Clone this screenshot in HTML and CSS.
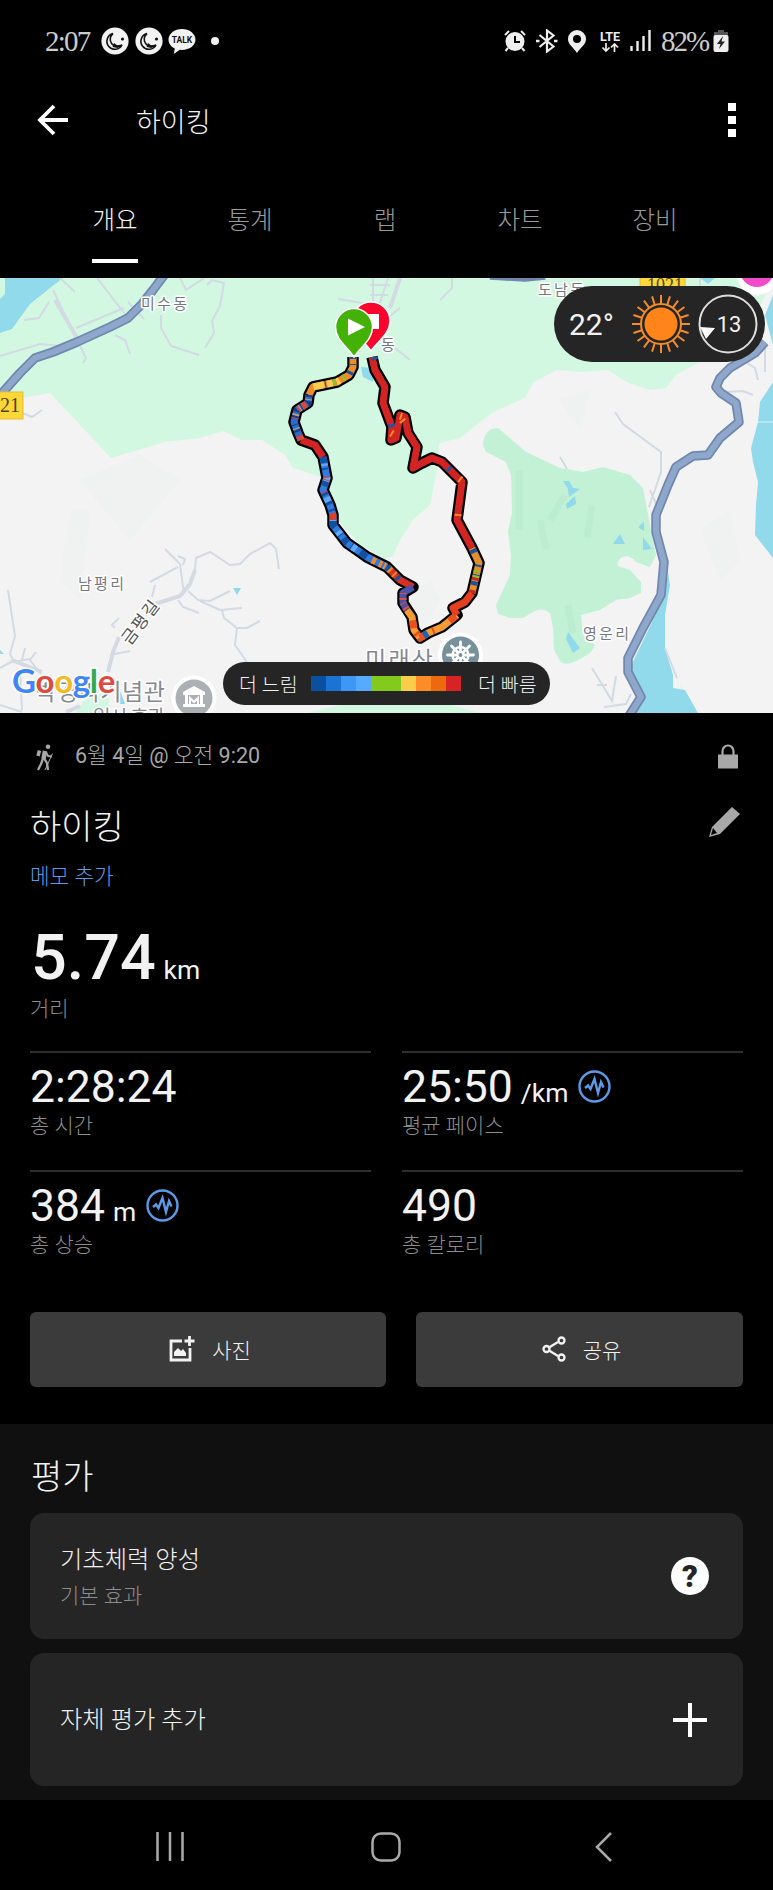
FILE: index.html
```html
<!DOCTYPE html>
<html lang="ko">
  <head>
    <meta charset="UTF-8" />
    <meta name="viewport" content="width=device-width, initial-scale=1.0" />
    <title>하이킹</title>
    <link rel="stylesheet" href="styles.css">
  </head>
  <body>
    <div class="status-bar">
      <div class="status-left">
        <span class="clock">2:07</span>
        <svg class="moon" width="28" height="28" viewBox="0 0 28 28">
          <circle cx="14" cy="14" r="13.6" fill="#f2f2f2" />
          <path d="M12 6.5a8 8 0 1 0 9 11.5a7 7 0 0 1-9-11.5z" fill="none" stroke="#111" stroke-width="1.6" />
          <path d="M13 16l3 2.2 4.500-.5-4 3.300-5-1z" fill="#111" />
          <circle cx="21.5" cy="12" r="1.6" fill="#111" />
        </svg>
        <svg class="moon" width="28" height="28" viewBox="0 0 28 28">
          <circle cx="14" cy="14" r="13.6" fill="#f2f2f2" />
          <path d="M12 6.5a8 8 0 1 0 9 11.5a7 7 0 0 1-9-11.5z" fill="none" stroke="#111" stroke-width="1.6" />
          <path d="M13 16l3 2.2 4.500-.5-4 3.300-5-1z" fill="#111" />
          <circle cx="21.5" cy="12" r="1.6" fill="#111" />
        </svg>
        <svg class="talk" width="28" height="28" viewBox="0 0 28 28">
          <path d="M14 2C6.500 2 .5 6.700.5 12.500c0 4 2.600 7.300 6.300 9l-1 5.500 6-4.200c9 .8 15.700-4 15.700-10.300C27.500 6.700 21.500 2 14 2z" fill="#f2f2f2" />
          <text x="14" y="15.500" text-anchor="middle" class="talk-text">TALK</text>
        </svg>
        <span class="dot"></span>
      </div>
      <div class="status-right">
        <svg width="22" height="22" viewBox="0 0 22 22">
          <g fill="none" stroke="#eee" stroke-width="2">
            <path d="M1 5l4-4M21 5l-4-4M4 18l-2.500 3M18 18l2.500 3" />
          </g>
          <circle cx="11" cy="11.500" r="9.500" fill="#eee" />
          <path d="M11 6v6h5" fill="none" stroke="#000" stroke-width="2" />
        </svg>
        <svg width="22" height="24" viewBox="0 0 22 24">
          <path d="M3.500 6l14 11.500-6.500 5v-21L17.500 6.500 3.500 18" fill="none" stroke="#eee" stroke-width="2.200" />
          <path d="M0 12h3.500M18 12h3.500" stroke="#eee" stroke-width="2.500" />
        </svg>
        <svg width="18" height="23" viewBox="0 0 18 23">
          <path fill="#eee" fill-rule="evenodd" d="M9 0a9 9 0 0 0-9 9c0 5.500 5.500 8.500 9 14 3.500-5.500 9-8.500 9-14a9 9 0 0 0-9-9zm0 5a4 4 0 1 1 0 8 4 4 0 0 1 0-8z" />
        </svg>
        <svg class="network" width="24" height="24" viewBox="0 0 24 24">
          <text x="12" y="11.500" text-anchor="middle" class="lte">LTE</text>
          <path d="M8 14v8M4.500 18.500L8 22l3.500-3.500M16.500 23v-8M13 18.500l3.500-3.500 3.500 3.500" fill="none" stroke="#eee" stroke-width="1.700" />
        </svg>
        <svg class="signal" width="21" height="22" viewBox="0 0 21 22">
          <path d="M1.500 16v5M7.500 11v10M13.500 6v15M19.500 0v21" stroke="#eee" stroke-width="2.400" />
        </svg>
        <span class="percent">82%</span>
        <svg class="battery" width="16" height="22" viewBox="0 0 16 22">
          <path d="M5 0h6v2h4v4H1V2h4z" fill="#555" />
          <rect x=".5" y="5" width="15" height="17" rx="2" fill="#eee" />
          <path d="M10 6l-6 8h3.500L6 19l6-7.500H8.500z" fill="#222" />
        </svg>
      </div>
    </div>

    <header class="app-bar">
      <svg width="32" height="32" viewBox="0 0 32 32">
        <path d="M17 2L3 16l14 14M3 16h28" fill="none" stroke="#fff" stroke-width="3.800" />
      </svg>
      <h1>하이킹</h1>
      <div class="more"><i></i><i></i><i></i></div>
    </header>

    <nav class="tabs">
      <a class="tab active">개요</a>
      <a class="tab">통계</a>
      <a class="tab">랩</a>
      <a class="tab">차트</a>
      <a class="tab">장비</a>
    </nav>

    <div class="map">
      <svg class="map-canvas" width="773" height="435" viewBox="0 278 773 435">
        <rect x="0" y="278" width="773" height="435" fill="#f3f3f3" />

        <!-- zonas verdes -->
        <path fill="#d3f8e2" d="M0 278H773L745 340 700 362 676 375 666 388 650 390 626 382 608 370 583 372 556 370 533 383 525 398 493 412 460 438 439 443 437 470 430 505 413 520 400 540 393 556 385 559 360 545 333 515 325 478 318 476 293 468 285 455 262 440 242 440 223 431 200 438 165 442 111 458 50 393 23 398 0 400z" />
        <path fill="#d3f8e2" d="M75 713L85 700 110 690 108 713zM307 713L345 704 440 702 480 713zM690 713l-10-28 18 28z" />
        <path fill="#c3f1d5" d="M483 445C484 432 490 428 498 428L526 452 560 468 583 472 603 467 630 475 643 488 650 525 656 555 650 567 636 562C626 550 616 560 618 566L630 570 641 582V593L630 598 616 600 600 610 581 615 583 635 595 645 591 652C580 660 566 668 560 661L554 650 553 628 550 613C543 608 538 609 533 612L523 618H510L498 614 496 605 510 575 511 555 508 532 512 512 511 475 506 462 486 452z" />
        <g fill="none" stroke="#b8e9cc" stroke-width="7" opacity=".5">
          <path d="M519 470v60M540 520l6 30M592 505l-5 32M565 495l-15 25M568 605l5 28" />
        </g>
        <g fill="#e9ebec" opacity=".25">
          <path d="M80 480l60-25 40 25-50 60zM70 510l20 0-10 90-20-20zM560 400l30-10-10 40zM700 530l30-20 10 50-20 20zM400 610l30-30 10 20-20 30z" />
        </g>

        <!-- agua -->
        <g fill="#90daec">
          <path d="M5 278H63L50 288 30 304 12 329 0 333V299L5 294z" />
          <path d="M773 382L760 402 758 422 751 448 753 462 758 482 756 505 755 535 773 558z" />
          <path d="M773 295l-8 20 8 30z" />
          <path d="M668 572L670 585 665 615V648L673 675V688L685 690 698 713H633L645 695 630 668 665 595z" />
          <path d="M361 367l12 1v14l-10-5zM563 481h6l4 7 7 1-11 8-1-8zM575 496l1 8-9 5-1-5zM620 534l5 10h-12zM638 527l6-5v9zM643 537l9 12-9 1zM568 632l12 16-7 5-7-14zM233 588h8l-4 7zM0 650l4 4H0zM120 690l5 14h-6z" />
          <path d="M700 278h15l-7 6z" />
        </g>
        <path d="M758 422h15" stroke="#d8eff5" stroke-width="1" />

        <!-- calles pequeñas -->
        <g fill="none" stroke="#d3dae4" stroke-width="2">
          <path d="M53 290l23 48 10 20-3 5M97 278l31 40M76 328l48-20M60 278l15 14M24 320l15-2 10-16M0 356l40-12 22 2M161 315l0 13 10 18 28 9M205 348l9-15-2-12 8-15 4-23-12-3-5 5M115 335l10 5 5 14M128 302l16 17M20 412l12 5 10-7M180 278l6 12 18-12" />
          <path d="M373 278l0 30M388 278l-8 25M338 299l30 5M395 348l15 12M370 285h20M370 295h18M440 300l12-12v-10M390 316l10-8" />
          <path d="M8 590l7 46-5 18 4 8 15-3 12 15M0 668l15-8M22 660l3-12M30 660l6-8M0 705l22 7M20 670l2 40M165 549l15 15 4 30M178 556l7 3-2 6M195 570l1-12 14-6 20 13 10-1 10-10 20-11 6 6 3 20M188 591l10 9 12 1 20-10M200 601l20 9 22-2M222 610l2 8 13 10h10l13-7M237 628l-2 17 12 17M155 585l-3 12M150 582l28-15M178 600l5 7 16 6M110 655l20-4M115 628l-3-3 7-7" />
          <path d="M615 412l8 12 38 28v20l-12 35M560 457l7 12M592 668l20 33 4-25M597 685h10M604 707l22-3 5-10M665 648l12 30M758 380l-3-12-12-8M725 392l18-1 10 4M700 278l0 8M650 490l8 18M765 342v30" />
        </g>
        <g fill="none" stroke="#d3dae4" stroke-width="4">
          <path d="M108 672l5-20 6-15M155 604l25-8 10-12 5-14M12 660l30 12M66 712l14-6M400 278l-10 30M55 300l22 38" />
        </g>

        <!-- carretera principal -->
        <path class="road-edge" d="M165 274L153 290 142 304 128 318 110 327 77 342 53 352 35 358 20 373 3 392-6 402" />
        <path class="road-fill" d="M165 274L153 290 142 304 128 318 110 327 77 342 53 352 35 358 20 373 3 392-6 402" />
        <path class="road-edge" d="M490 275L525 277 545 275" />
        <path class="road-edge" d="M765 342L755 353 730 368 720 378 716 387 721 393 736 403 739 422 720 438 708 455 693 456 676 467 668 485 660 505 656 515V532L664 562 661 595 643 628 628 658V672L641 697 629 716" />
        <path class="road-fill" d="M765 342L755 353 730 368 720 378 716 387 721 393 736 403 739 422 720 438 708 455 693 456 676 467 668 485 660 505 656 515V532L664 562 661 595 643 628 628 658V672L641 697 629 716" />

        <!-- etiquetas -->
        <rect x="-2" y="392" width="25" height="27" fill="#fbd738" stroke="#e5bd30" />
        <text x="0" y="412" class="shield">21</text>
        <rect x="640" y="270" width="45" height="19" fill="#fbd738" stroke="#e5bd30" />
        <text x="647" y="291" class="shield small">1021</text>
        <g class="place">
          <text x="141" y="309" textLength="46">미수동</text>
          <text x="538" y="295" textLength="46">도남동</text>
          <text x="381" y="350">동</text>
          <text x="78" y="589" textLength="46">남평리</text>
          <text x="583" y="639" textLength="46">영운리</text>
          <text x="0" y="0" textLength="50" class="dark" transform="translate(130 646) rotate(-53)">금평길</text>
        </g>
        <text x="365" y="668" class="place-big" textLength="68">미래산</text>
        <text x="35" y="700" class="place-big" textLength="130">박경리기념관</text>
        <text x="93" y="724" class="place-big sub" textLength="72">일시 휴관</text>

        <circle cx="194" cy="698" r="22.500" fill="#fff" />
        <circle cx="194" cy="698" r="18.500" fill="#acb0b4" />
        <path d="M183 692l11-6 11 6v3h-22zM185 695h3v11h-3zM200 695h3v11h-3zM183 704h22v3h-22z" fill="#fff" />
        <path d="M190 704v-6l4 4 4-4v6" fill="none" stroke="#fff" stroke-width="2" />

        <circle cx="460.500" cy="655" r="22.500" fill="#fff" />
        <circle cx="460.500" cy="655" r="18.500" fill="#78909c" />
        <g transform="translate(460.500 655)" fill="none" stroke="#fff">
          <circle r="8" stroke-width="2.500" />
          <circle r="3" stroke-width="2" />
          <path stroke-width="2.800" stroke-linecap="round" d="M0-13V-4M0 13V4M-13 0H-4M13 0H4M-9-9l6 6M9 9L3 3M9-9L3-3M-9 9l6-6" />
        </g>
        <circle cx="757" cy="275" r="20" fill="#fff" />
        <path d="M745 287l13 9 13-9z" fill="#fff" />
        <circle cx="757" cy="270" r="17" fill="#f04bc8" />

        <!-- ruta -->
        <path class="track-edge" d="M353 357V367L349 375 337 382 313 387 309 395 308 403 297 410 294 422 298 433 301 440 315 445 323 457 327 478 323 490 330 505 333 515V525L347 543 360 552 367 557 387 567 400 580 413 587 403 593V603L412 617 414 630 420 638 428 633 442 627 457 615 453 608 465 602 472 593 479 563 472 548 457 520 462 482 442 462 432 458 422 463 413 468 417 447 408 433 405 417 400 415 396 438 391 440 392 427 383 403 385 387 375 370 372 357" />
        <g class="track">
          <path stroke="#f08c28" d="M353 357V367L349 375 337 382 313 387 309 395" />
          <path stroke="#2d6ccd" d="M309 395L308 403 297 410 294 422 298 433 301 440" />
          <path stroke="#d32424" d="M301 440L315 445 323 457" />
          <path stroke="#2f7be0" d="M323 457L327 478 323 490 330 505 333 515V525L347 543 360 552 367 557 387 567" />
          <path stroke="#d83022" d="M387 567L400 580 413 587" />
          <path stroke="#4b52a8" d="M413 587L403 593V603L407 610" />
          <path stroke="#f59b33" d="M407 610L412 617 414 630 420 638 428 633 442 627 457 615" />
          <path stroke="#e2401f" d="M457 615L453 608 465 602 472 593" />
          <path stroke="#e2902c" d="M472 593L479 563 472 548" />
          <path stroke="#d32424" d="M472 548L457 520 462 482 442 462 432 458 422 463 413 468 417 447 408 433 405 417 400 415 396 438 391 440 392 427 383 403 385 387 375 370 372 357" />
        </g>
        <!-- cambios de ritmo sobre la ruta -->
        <g class="track">
          <path stroke="#1552a8" stroke-dasharray="2 5 1 7 3 19" d="M353 357V367L349 375 337 382 313 387 309 395" />
          <path stroke="#fbcd4b" stroke-dasharray="0 30 3 4 6 3 3 0 8 40" d="M353 357V367L349 375 337 382 313 387 309 395" />
          <path stroke="#7fc832" stroke-dasharray="0 24 2 8 2 90" d="M353 357V367L349 375 337 382 313 387 309 395" />
          <path stroke="#123f87" stroke-dasharray="2 4 3 6 1 5" d="M309 395L308 403 297 410 294 422 298 433 301 440" />
          <path stroke="#d64a3c" stroke-dasharray="0 10 5 3 2 9 1 8" d="M309 395L308 403 297 410 294 422 298 433 301 440" />
          <path stroke="#c9a067" stroke-dasharray="0 4 1 12 1 7 2 9" d="M309 395L308 403 297 410 294 422 298 433 301 440" />
          <path stroke="#1450a0" stroke-dasharray="6 5 2 9 8 7 3 4" d="M323 457L327 478 323 490 330 505 333 515V525L347 543 360 552 367 557" />
          <path stroke="#62a8f5" stroke-dasharray="0 7 2 12 4 17 5 11" d="M323 457L327 478 323 490 330 505 333 515V525L347 543 360 552 367 557" />
          <path stroke="#d8432f" stroke-dasharray="0 20 1 2 1 12 1 22 7 200" d="M323 457L327 478 323 490 330 505 333 515V525L347 543 360 552 367 557" />
          <path stroke="#f08c28" stroke-dasharray="4 4 3 2 2 3" d="M372 560L387 567 395 575" />
          <path stroke="#1450a0" stroke-dasharray="3 11" d="M387 567L400 580" />
          <path stroke="#e0503c" stroke-dasharray="1 4 2 3" d="M403 593V603L407 610" />
          <path stroke="#e8501d" stroke-dasharray="0 12 8 5 3 3 6 9 2 6" d="M407 610L412 617 414 630 420 638 428 633 442 627 457 615" />
          <path stroke="#1e62b5" stroke-dasharray="0 36 5 200" d="M407 610L412 617 414 630 420 638 428 633 442 627 457 615" />
          <path stroke="#1e50a0" stroke-dasharray="0 8 4 5 2 8 2 13 4 80" d="M472 593L479 563 472 548" />
          <path stroke="#d32424" stroke-dasharray="3 10 3 5 1 60" d="M472 593L479 563 472 548" />
          <path stroke="#7fc832" stroke-dasharray="0 16 2 3 2 80" d="M472 593L479 563 472 548" />
          <path stroke="#f08c28" stroke-dasharray="2 80" d="M458 516L460 490M461 480L456 476M391 433L396 436M402 420L406 425M400 416L406 418" />
          <path stroke="#23559f" stroke-dasharray="3 80" d="M391 424L393 430M450 470L447 467M374 357L376 365" />
        </g>

        <!-- marcadores de inicio y fin -->
        <path d="M371 351C364 341 352 334 352 321a19 19 0 0 1 38 0C390 334 378 341 371 351z" fill="#f9052d" stroke="#fff" stroke-width="1.500" />
        <rect x="363" y="314" width="16" height="15" fill="#fff" />
        <path d="M354 357C347 346 335.500 340 335.500 327a18.500 18.500 0 0 1 37 0C372.500 340 361 346 354 357z" fill="#43b106" stroke="#fff" stroke-width="1.500" />
        <path d="M348 318.500V335.500L365 327z" fill="#fff" />
      </svg>

      <div class="google"><b class="g-blue">G</b><b class="g-red">o</b><b class="g-yellow">o</b><b class="g-blue">g</b><b class="g-green">l</b><b class="g-red">e</b></div>

      <div class="weather">
        <span class="temp">22°</span>
        <svg width="58" height="58" viewBox="-29 -29 58 58">
          <circle r="16.500" fill="#ff851b" />
          <g fill="none" stroke="#f28c2b" stroke-width="2">
            <circle r="20" />
            <path d="M0-20v-9M0 20v9M-20 0h-9M20 0h9" />
            <path d="M0-20v-9M0 20v9M-20 0h-9M20 0h9" transform="rotate(18)" />
            <path d="M0-20v-9M0 20v9M-20 0h-9M20 0h9" transform="rotate(36)" />
            <path d="M0-20v-9M0 20v9M-20 0h-9M20 0h9" transform="rotate(54)" />
            <path d="M0-20v-9M0 20v9M-20 0h-9M20 0h9" transform="rotate(72)" />
          </g>
        </svg>
        <svg class="wind" width="60" height="60" viewBox="-30 -30 60 60">
          <circle r="28.500" fill="none" stroke="#ddd" stroke-width="2" />
          <path d="M-28 3l15 1-9 11z" fill="#fff" />
          <text x="1" y="8" text-anchor="middle" class="wind-text">13</text>
        </svg>
      </div>

      <div class="legend">
        <span>더 느림</span>
        <div class="scale">
          <i class="c1"></i><i class="c2"></i><i class="c3"></i><i class="c4"></i><i class="c5"></i><i class="c5"></i><i class="c6"></i><i class="c7"></i><i class="c8"></i><i class="c9"></i>
        </div>
        <span>더 빠름</span>
      </div>
    </div>

    <section class="summary">
      <div class="date-row">
        <svg width="18" height="27" viewBox="0 0 18 27">
          <g fill="none" stroke="#a8a8a8" stroke-linejoin="round">
            <circle cx="12" cy="2.800" r="2.300" fill="#a8a8a8" stroke="none" />
            <path d="M9 7L7.500 15" stroke-width="4.500" />
            <path d="M3.500 6.500L2 12" stroke-width="3.500" />
            <path d="M7 14.500l-2 5.500-3 6M8.500 15l2.500 4 1 7" stroke-width="2.300" />
            <path d="M10 8l2 4 4 .5" stroke-width="1.800" />
            <path d="M16.500 9.500L9 26" stroke-width="1" />
          </g>
        </svg>
        <span class="date"><b>6</b>월 <b>4</b>일 <b>@</b> 오전 <b>9:20</b></span>
        <svg class="lock" width="20" height="25" viewBox="0 0 20 25">
          <rect y="10.500" width="20" height="14" fill="#a8a8a8" />
          <path d="M4.500 11V7a5.500 5.500 0 0 1 11 0v4" fill="none" stroke="#a8a8a8" stroke-width="2.200" />
        </svg>
      </div>
      <div class="title-row">
        <h2>하이킹</h2>
        <svg width="33" height="31" viewBox="0 0 33 31">
          <path fill="#a8a8a8" fill-rule="evenodd" d="M24 0l8 7-20 20-11 3 3-10zM5 21l-2 7 6-2z" />
        </svg>
      </div>
      <a class="note">메모 추가</a>

      <div class="distance"><strong>5.74</strong> <span>km</span></div>
      <div class="label">거리</div>

      <div class="stats">
        <div class="stat">
          <div class="value">2:28:24</div>
          <div class="label">총 시간</div>
        </div>
        <div class="stat">
          <div class="value">25:50 <small>/km</small>
            <svg class="pulse" width="33" height="33" viewBox="0 0 33 33">
              <circle cx="16.500" cy="16.500" r="15" />
              <path d="M7 18l3-2.500 2.500 3.500 4-10 3.500 14 3-11 2.500 5.500" />
            </svg>
          </div>
          <div class="label">평균 페이스</div>
        </div>
        <div class="stat">
          <div class="value">384 <small>m</small>
            <svg class="pulse" width="33" height="33" viewBox="0 0 33 33">
              <circle cx="16.500" cy="16.500" r="15" />
              <path d="M7 18l3-2.500 2.500 3.500 4-10 3.500 14 3-11 2.500 5.500" />
            </svg>
          </div>
          <div class="label">총 상승</div>
        </div>
        <div class="stat">
          <div class="value">490</div>
          <div class="label">총 칼로리</div>
        </div>
      </div>

      <div class="actions">
        <button class="photo">
          <svg width="26" height="26" viewBox="0 0 26 26">
            <path d="M13 5H2v19h19V12" fill="none" stroke="#f2f2f2" stroke-width="2.800" />
            <path d="M20.500 0v10M15.500 5h10" stroke="#f2f2f2" stroke-width="2.800" />
            <path d="M5 20v-4l4-4 3 3 2-2 3 4v3z" fill="#f2f2f2" />
          </svg>
          사진
        </button>
        <button class="share">
          <svg width="24" height="26" viewBox="0 0 24 26">
            <g fill="none" stroke="#f2f2f2" stroke-width="2.300">
              <path d="M7 11.500l9-5.500M7 14.500l9 5.500" />
              <circle cx="4.500" cy="13" r="3" />
              <circle cx="19.500" cy="4.500" r="3" />
              <circle cx="19.500" cy="21.500" r="3" />
            </g>
          </svg>
          공유
        </button>
      </div>
    </section>

    <section class="review">
      <h3>평가</h3>
      <div class="card">
        <div class="card-text">
          <div class="card-title">기초체력 양성</div>
          <div class="card-sub">기본 효과</div>
        </div>
        <span class="help">?</span>
      </div>
      <div class="card tall">
        <div class="card-title">자체 평가 추가</div>
        <svg class="plus" width="36" height="36" viewBox="0 0 36 36">
          <path d="M18 1v34M1 18h34" stroke="#fff" stroke-width="4" />
        </svg>
      </div>
    </section>

    <footer class="nav-bar">
      <svg width="28" height="30" viewBox="0 0 28 30">
        <path d="M1.500 0v29M14 0v29M26.500 0v29" stroke="#aaa" stroke-width="2.500" />
      </svg>
      <svg class="home" width="30" height="30" viewBox="0 0 30 30">
        <rect x="1.500" y="1.500" width="27" height="27" rx="8.500" fill="none" stroke="#aaa" stroke-width="2.500" />
      </svg>
      <svg width="18" height="30" viewBox="0 0 18 30">
        <path d="M16 1L2 15l14 14" fill="none" stroke="#aaa" stroke-width="2.500" />
      </svg>
    </footer>
  </body>
</html>
```
FILE: styles.css
```css
/* Estilos generales */
* {
  box-sizing: border-box;
}

body {
  width: 773px;
  height: 1890px;
  margin: 0;
  background-color: #000;
  color: #f2f2f2;
  font-family: Roboto, "Noto Sans CJK KR", sans-serif;
  font-weight: 300;
  display: flex;
  flex-direction: column;
  overflow: hidden;
}

h1,
h2,
h3 {
  margin: 0;
  font-weight: 300;
}

svg {
  display: block;
  flex: none;
}

/* Barra de estado */
.status-bar {
  height: 82px;
  padding: 0 44px 0 45px;
  display: flex;
  justify-content: space-between;
  align-items: center;
}

.status-left,
.status-right {
  display: flex;
  align-items: center;
}

.clock,
.percent {
  font-family: "Liberation Serif", serif;
  font-size: 29px;
  font-weight: 400;
  letter-spacing: -1.8px;
  color: #ccc;
}

.clock {
  width: 56px;
}

.moon {
  margin-right: 6px;
}

.talk {
  margin-left: -1px;
}

.talk-text {
  font: 700 8.5px Roboto, sans-serif;
  fill: #111;
}

.dot {
  width: 8px;
  height: 8px;
  margin-left: 15px;
  border-radius: 50%;
  background-color: #f2f2f2;
}

.status-right {
  gap: 10px;
}

.lte {
  font: 700 12.5px Roboto, sans-serif;
  fill: #eee;
}

.network {
  margin-left: 2px;
}

.signal {
  margin-left: -2px;
}

.status-right .percent {
  width: 48px;
  letter-spacing: -2px;
}

.battery {
  margin-left: -6px;
}

/* Cabecera */
.app-bar {
  height: 76px;
  padding: 0 37px;
  display: flex;
  align-items: center;
}

.app-bar h1 {
  flex: 1;
  margin-left: 67px;
  font-size: 27px;
}

.more {
  display: flex;
  flex-direction: column;
  gap: 5px;
}

.more i {
  width: 8px;
  height: 8px;
  background-color: #fff;
}

/* Pestañas */
.tabs {
  height: 120px;
  padding: 0 50.5px 15px 47.5px;
  display: flex;
}

.tab {
  width: 135px;
  flex: none;
  display: flex;
  flex-direction: column;
  align-items: center;
  justify-content: flex-end;
  height: 105px;
  padding-bottom: 24px;
  font-size: 24.5px;
  line-height: 36px;
  color: #999;
}

.tab.active {
  padding-bottom: 0;
  color: #f2f2f2;
}

.tab.active::after {
  content: "";
  width: 46px;
  height: 4px;
  margin-top: 20px;
  background-color: #fff;
}

/* Mapa */
.map {
  position: relative;
  height: 435px;
}

.road-edge,
.road-fill {
  fill: none;
  stroke: #7088b0;
  stroke-width: 9.5;
  stroke-linejoin: round;
}

.road-fill {
  stroke: #8fa7ca;
  stroke-width: 6;
}

.track-edge {
  fill: none;
  stroke: #000;
  stroke-width: 11.5;
  stroke-linejoin: round;
}

.track path {
  fill: none;
  stroke-width: 7;
  stroke-linejoin: round;
}

.shield {
  font: 400 20px "Liberation Serif", serif;
  fill: #4d4522;
}

.shield.small {
  font-size: 18px;
}

.place text,
.place-big {
  font-family: "Noto Sans CJK KR", sans-serif;
  font-size: 15px;
  font-weight: 400;
  fill: #75797f;
  stroke: #fff;
  stroke-width: 3px;
  stroke-linejoin: round;
  paint-order: stroke;
}

.place .dark {
  font-size: 17px;
  fill: #555;
}

.place-big {
  font-size: 23px;
  fill: #84898e;
}

.place-big.sub {
  font-size: 19px;
}

.google {
  position: absolute;
  left: 12px;
  bottom: 11px;
  font-family: Lato, sans-serif;
  font-size: 33px;
  line-height: 44px;
  letter-spacing: -0.3px;
  -webkit-text-stroke: 3px #fff;
  paint-order: stroke fill;
}

.google b {
  font-weight: 700;
}

.g-blue {
  color: #4285f4;
}

.g-red {
  color: #dd4b3e;
}

.g-yellow {
  color: #f5b921;
}

.g-green {
  color: #34a853;
}

.weather {
  position: absolute;
  top: 8px;
  right: 8px;
  width: 211px;
  height: 76px;
  padding: 0 6px 0 15px;
  border-radius: 38px;
  background-color: #252525;
  display: flex;
  align-items: center;
}

.temp {
  width: 63px;
  font-size: 30px;
  font-weight: 400;
}

.wind {
  margin-left: 8px;
}

.wind-text {
  font: 400 22px Roboto, sans-serif;
  fill: #f2f2f2;
}

.legend {
  position: absolute;
  left: 223px;
  bottom: 8px;
  width: 327px;
  height: 43px;
  padding: 0 13px 0 16px;
  border-radius: 22px;
  background-color: #252525;
  display: flex;
  align-items: center;
  font-size: 19.5px;
}

.scale {
  display: flex;
  width: 150px;
  height: 15px;
  margin: 0 17px auto 0;
  margin-top: 14px;
}

.legend span:first-child {
  width: 72px;
}

.scale i {
  flex: 1;
}

.c1 { background-color: #0a50a1; }
.c2 { background-color: #1b74d4; }
.c3 { background-color: #3c97f6; }
.c4 { background-color: #56aaff; }
.c5 { background-color: #82cb1c; }
.c6 { background-color: #fbcd4b; }
.c7 { background-color: #fd8b27; }
.c8 { background-color: #ea6a0d; }
.c9 { background-color: #d72323; }

/* Resumen de la actividad */
.summary {
  height: 711px;
  padding: 29px 30px 0;
}

.date-row {
  height: 30px;
  padding: 0 5px 0 6px;
  display: flex;
  align-items: center;
}

.date {
  flex: 1;
  margin-left: 21px;
  font-size: 21.5px;
  line-height: 28px;
  padding-bottom: 2px;
  color: #a8a8a8;
}

.date b {
  font-weight: 400;
}

.lock {
  margin-bottom: 1px;
}

.title-row {
  height: 50px;
  margin-top: 29px;
  padding-right: 2px;
  display: flex;
  align-items: center;
  justify-content: space-between;
}

.title-row h2 {
  font-size: 34px;
  line-height: 50px;
  padding-top: 2px;
}

.title-row svg {
  margin-bottom: 7px;
}

.note {
  display: block;
  height: 30px;
  margin-top: 11px;
  font-size: 21.3px;
  line-height: 30px;
  color: #5b9be8;
}

.distance {
  height: 80px;
  margin-top: 26px;
  padding-left: 1px;
  font-size: 63px;
  line-height: 80px;
  font-weight: 400;
}

.distance strong {
  font-weight: 500;
}

.distance span {
  margin-left: -8px;
  font-size: 26.5px;
}

.label {
  height: 30px;
  font-size: 21px;
  line-height: 30px;
  color: #8c8c8c;
}

.distance + .label {
  margin-top: -4px;
}

.stats {
  margin-top: 27px;
  display: grid;
  grid-template-columns: 1fr 1fr;
  column-gap: 31px;
}

.stat {
  height: 119px;
  padding-top: 8px;
  border-top: 2px solid #2e2e2e;
}

.value {
  display: flex;
  align-items: baseline;
  height: 50px;
  font-size: 44.5px;
  line-height: 53px;
  font-weight: 400;
}

.value small {
  margin-left: 8px;
  font-size: 26.5px;
}

.pulse {
  align-self: center;
  margin-left: 10px;
  fill: none;
  stroke: #5b9be8;
  stroke-width: 2.4;
}

.actions {
  margin-top: 23px;
  display: grid;
  grid-template-columns: 356px 327px;
  column-gap: 30px;
}

button {
  height: 75px;
  padding: 0 0 2px 4px;
  border: none;
  border-radius: 6px;
  background-color: #3b3b3b;
  color: #f2f2f2;
  font-family: inherit;
  font-size: 21px;
  font-weight: 300;
  display: flex;
  align-items: center;
  justify-content: center;
  gap: 17px;
}

/* Evaluación */
.review {
  height: 376px;
  padding: 29px 30px 0;
  background-color: #101010;
}

.review h3 {
  height: 48px;
  padding-left: 1px;
  font-size: 34px;
  line-height: 49px;
}

.card {
  height: 126px;
  margin-top: 12px;
  padding: 0 34px 0 30px;
  border-radius: 14px;
  background-color: #252525;
  display: flex;
  align-items: center;
  justify-content: space-between;
}

.card.tall {
  height: 133px;
  margin-top: 14px;
}

.card-text {
  padding-top: 4px;
}

.card-title {
  font-size: 24.3px;
  line-height: 36px;
}

.card-sub {
  font-size: 21px;
  line-height: 36px;
  color: #8c8c8c;
}

.help {
  width: 38px;
  height: 38px;
  border-radius: 50%;
  background-color: #fff;
  color: #252525;
  font-size: 31px;
  line-height: 39px;
  font-weight: 900;
  text-align: center;
}

.plus {
  margin-right: 1px;
}

/* Barra de navegación */
.nav-bar {
  height: 90px;
  padding: 4px 160px 0 156px;
  display: flex;
  align-items: center;
  justify-content: space-between;
}

.home {
  margin-right: 7px;
}
```
